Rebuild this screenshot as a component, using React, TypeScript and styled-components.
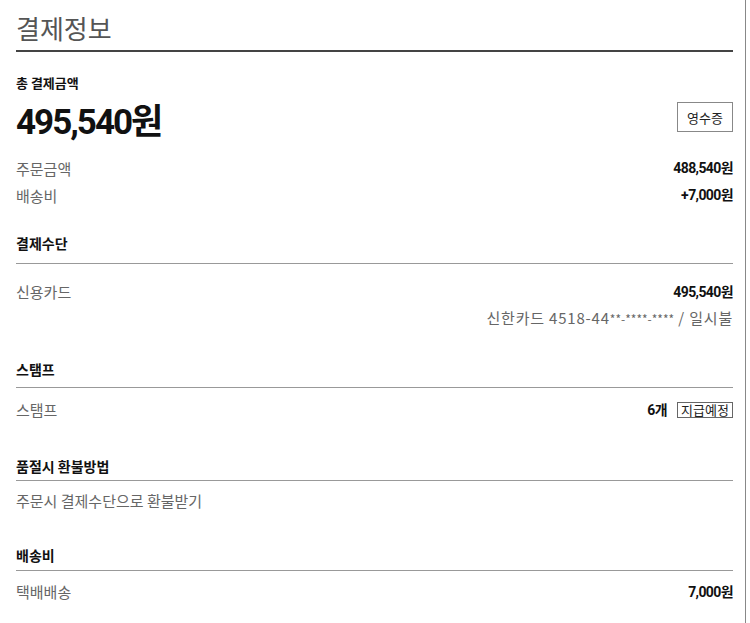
import React from 'react'
import styled, {createGlobalStyle} from 'styled-components'

const GlobalStyle = createGlobalStyle`
  body {
    margin: 0;
    background: #fff;
    font-family: "Noto Sans CJK KR", "Noto Sans", sans-serif;
  }
`

type RowType = {
    label: string
    value?: string
}

const summaryRows: RowType[] = [
    {label: '주문금액', value: '488,540원'},
    {label: '배송비', value: '+7,000원'},
]

export default function App() {
    return (
        <Page>
            <GlobalStyle/>
            <Title>결제정보</Title>

            <TotalLabel>총 결제금액</TotalLabel>
            <TotalRow>
                <TotalAmount>495,540원</TotalAmount>
                <ReceiptButton>영수증</ReceiptButton>
            </TotalRow>

            <Summary>
                {summaryRows.map(row => (
                    <SummaryRow key={row.label}>
                        <Label>{row.label}</Label>
                        <Value>{row.value}</Value>
                    </SummaryRow>
                ))}
            </Summary>

            <Section $top={24}>
                <Heading $pad={10}>결제수단</Heading>
                <Body $pad={15}>
                    <Row>
                        <Label>신용카드</Label>
                        <Value>495,540원</Value>
                    </Row>
                    <Row $end>
                        <CardInfo>신한카드 4518-44<Stars>**-****-****</Stars> / 일시불</CardInfo>
                    </Row>
                </Body>
            </Section>

            <Section $top={27}>
                <Heading $pad={8}>스탬프</Heading>
                <Body $pad={9}>
                    <Row>
                        <Label>스탬프</Label>
                        <StampValue>
                            <Value>6개</Value>
                            <Tag>지급예정</Tag>
                        </StampValue>
                    </Row>
                </Body>
            </Section>

            <Section $top={33}>
                <Heading $pad={4}>품절시 환불방법</Heading>
                <Body $pad={7}>
                    <Row>
                        <Label>주문시 결제수단으로 환불받기</Label>
                    </Row>
                </Body>
            </Section>

            <Section $top={31}>
                <Heading $pad={5}>배송비</Heading>
                <Body $pad={8}>
                    <Row>
                        <Label>택배배송</Label>
                        <Value>7,000원</Value>
                    </Row>
                </Body>
            </Section>
        </Page>
    )
}

const Page = styled.div`
  box-sizing: border-box;
  width: 746px;
  min-height: 623px;
  padding: 0 12px 0 16px;
  border-right: 1px solid #888;
`

const Title = styled.h1`
  margin: 0;
  padding: 10px 0 4px;
  line-height: 36px;
  font-size: 26px;
  font-weight: 400;
  color: #555;
  border-bottom: 2px solid #444;
`

const TotalLabel = styled.div`
  margin-top: 21px;
  line-height: 20px;
  font-size: 13px;
  font-weight: 700;
  color: #111;
`

const TotalRow = styled.div`
  display: flex;
  align-items: center;
  justify-content: space-between;
  margin-top: 5px;
  height: 40px;
`

const TotalAmount = styled.div`
  font-family: Roboto, "Noto Sans CJK KR", sans-serif;
  font-size: 35px;
  font-weight: 700;
  letter-spacing: -2px;
  color: #111;
`

const ReceiptButton = styled.button`
  box-sizing: border-box;
  width: 56px;
  height: 30px;
  margin-top: -2px;
  padding: 0;
  border: 1px solid #888;
  background: #fff;
  font-family: "Noto Sans CJK KR", sans-serif;
  font-size: 13px;
  color: #222;
`

const Summary = styled.div`
  margin-top: 17px;
`

const SummaryRow = styled.div`
  display: flex;
  justify-content: space-between;
  align-items: center;
  line-height: 27px;
`

const Section = styled.section<{ $top: number }>`
  margin-top: ${p => p.$top}px;
`

const Heading = styled.h2<{ $pad: number }>`
  margin: 0;
  padding-bottom: ${p => p.$pad}px;
  line-height: 20px;
  font-size: 14px;
  font-weight: 700;
  color: #111;
  border-bottom: 1px solid #999;
`

const Body = styled.div<{ $pad: number }>`
  padding-top: ${p => p.$pad}px;
`

const Row = styled.div<{ $end?: boolean }>`
  display: flex;
  justify-content: ${p => (p.$end ? 'flex-end' : 'space-between')};
  align-items: center;
  line-height: 26px;
`

const Label = styled.span`
  font-size: 15px;
  color: #666;
`

const Value = styled.span`
  font-family: Roboto, "Noto Sans CJK KR", sans-serif;
  font-size: 14px;
  font-weight: 700;
  letter-spacing: -0.6px;
  color: #111;
`

const CardInfo = styled.span`
  font-size: 15px;
  letter-spacing: 0.8px;
  color: #666;
`

const Stars = styled.span`
  font-size: 12px;
  letter-spacing: 0;
`

const StampValue = styled.div`
  display: flex;
  align-items: center;
  gap: 10px;
`

const Tag = styled.span`
  box-sizing: border-box;
  display: inline-flex;
  align-items: center;
  justify-content: center;
  width: 56px;
  height: 16px;
  border: 1px solid #666;
  font-size: 13px;
  line-height: 14px;
  color: #222;
`
